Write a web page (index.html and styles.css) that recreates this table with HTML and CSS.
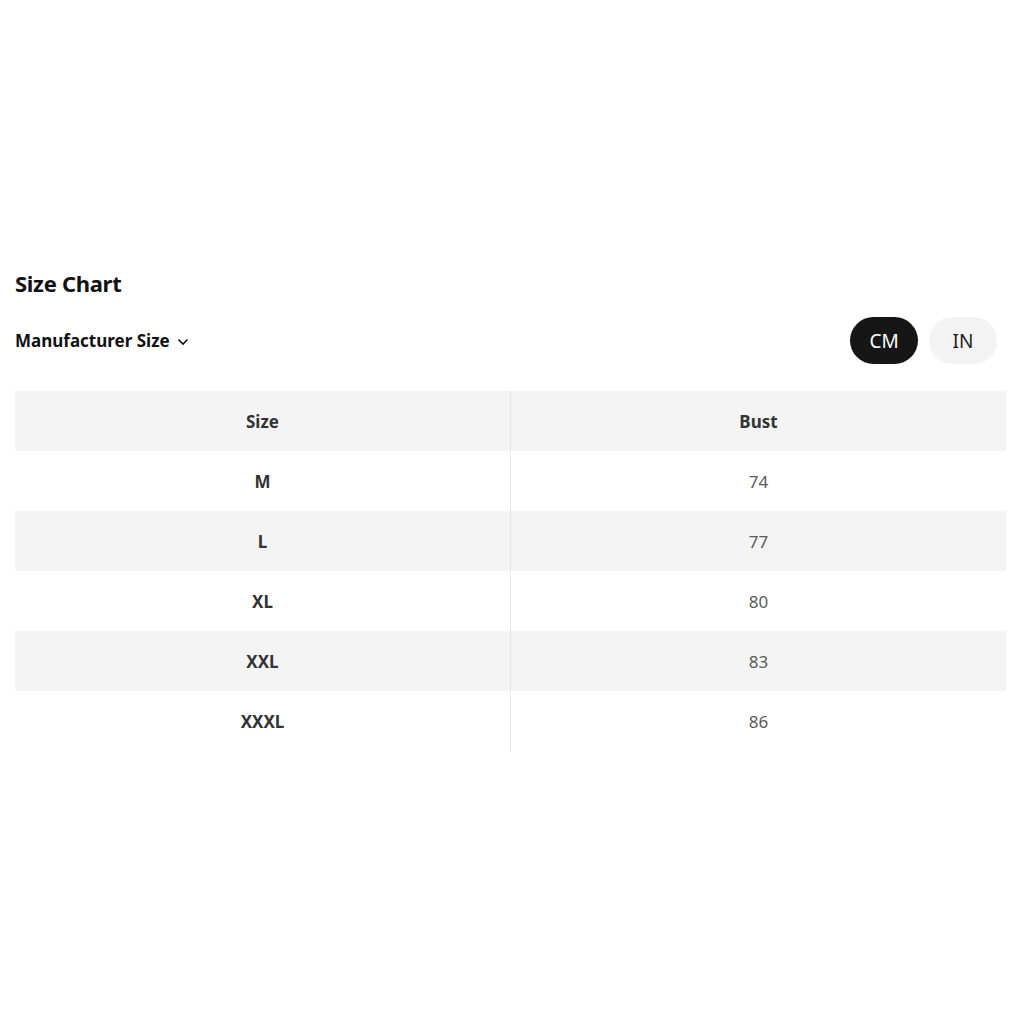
FILE: index.html
```html
<!DOCTYPE html>
<html>
<head>
<meta charset="utf-8">
<link rel="stylesheet" href="styles.css">
</head>
<body>
<div class="chart">
  <h2 class="title">Size Chart</h2>
  <div class="bar">
    <div class="select">Manufacturer Size
      <svg class="chev" width="12" height="8" viewBox="0 0 12 8"><path d="M1.5 1.5 L6 6 L10.5 1.5" fill="none" stroke="#111" stroke-width="1.6"/></svg>
    </div>
    <div class="units">
      <span class="unit active">CM</span>
      <span class="unit">IN</span>
    </div>
  </div>
  <div class="table">
    <div class="row head"><div class="cell">Size</div><div class="cell">Bust</div></div>
    <div class="row"><div class="cell size">M</div><div class="cell">74</div></div>
    <div class="row alt"><div class="cell size">L</div><div class="cell">77</div></div>
    <div class="row"><div class="cell size">XL</div><div class="cell">80</div></div>
    <div class="row alt"><div class="cell size">XXL</div><div class="cell">83</div></div>
    <div class="row"><div class="cell size">XXXL</div><div class="cell">86</div></div>
  </div>
</div>
</body>
</html>
```
FILE: styles.css
```css
html, body { margin: 0; padding: 0; background: #fff; }
body { font-family: "Noto Sans", "Open Sans", sans-serif; color: #111; }
.chart { padding: 267px 17px 0 15px; }
.title { margin: 0; font-size: 22px; line-height: 32px; font-weight: 700; letter-spacing: -0.3px; }
.bar { display: flex; align-items: center; justify-content: space-between; margin-top: 18px; padding-right: 9px; }
.select { font-size: 17px; font-weight: 700; display: flex; align-items: center; gap: 7px; letter-spacing: 0; }
.chev { margin-top: 3px; }
.units { display: flex; gap: 11px; }
.unit { width: 68px; height: 47px; border-radius: 24px; background: #f3f3f3; color: #222; display: flex; align-items: center; justify-content: center; font-size: 19px; }
.unit.active { background: #161616; color: #fff; }
.table { margin-top: 27px; width: 991px; }
.row { display: grid; grid-template-columns: 495px 1fr; height: 60px; }
.row.head, .row.alt { background: #f4f4f4; }
.cell { display: flex; align-items: center; justify-content: center; font-size: 17px; color: #5a5a5a; }
.cell + .cell { border-left: 1px solid #e6e6e6; }
.head .cell { font-weight: 700; color: #333; }
.cell.size { font-weight: 700; color: #333; }
```
